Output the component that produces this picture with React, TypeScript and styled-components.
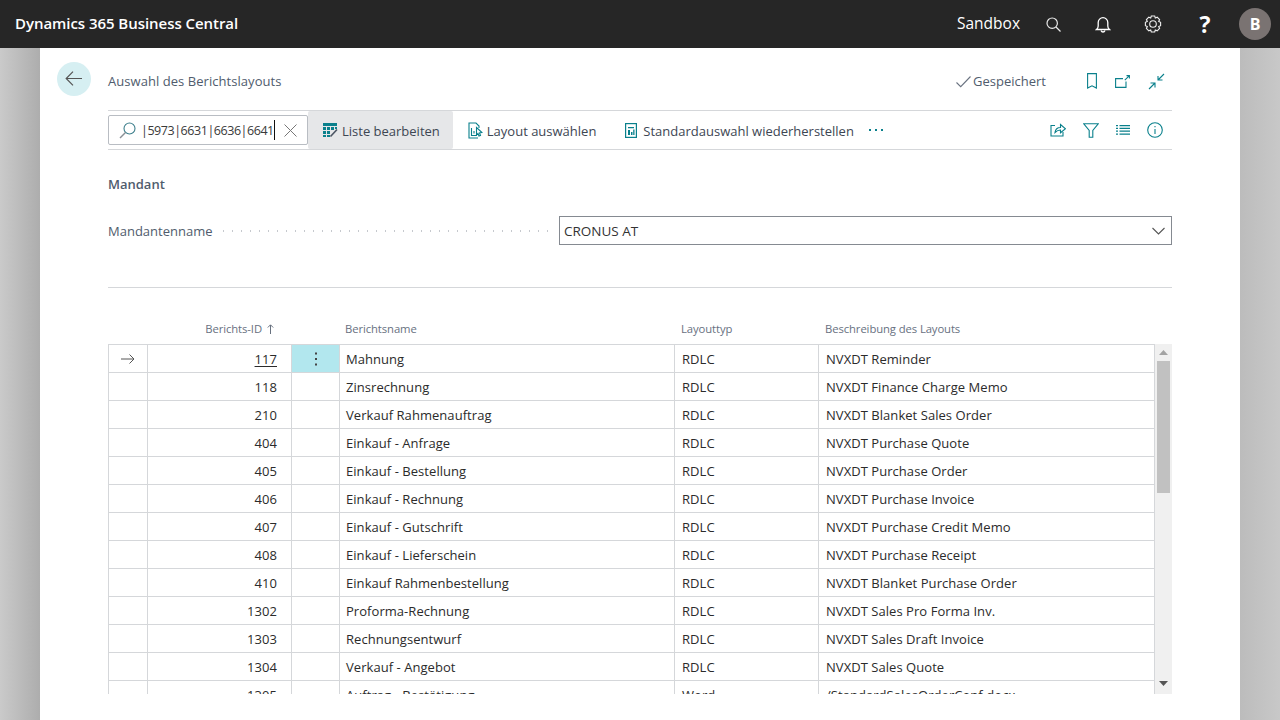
import { Fragment } from "react"
import styled, { createGlobalStyle } from "styled-components"

const rows = [
	["117", "Mahnung", "RDLC", "NVXDT Reminder"],
	["118", "Zinsrechnung", "RDLC", "NVXDT Finance Charge Memo"],
	["210", "Verkauf Rahmenauftrag", "RDLC", "NVXDT Blanket Sales Order"],
	["404", "Einkauf - Anfrage", "RDLC", "NVXDT Purchase Quote"],
	["405", "Einkauf - Bestellung", "RDLC", "NVXDT Purchase Order"],
	["406", "Einkauf - Rechnung", "RDLC", "NVXDT Purchase Invoice"],
	["407", "Einkauf - Gutschrift", "RDLC", "NVXDT Purchase Credit Memo"],
	["408", "Einkauf - Lieferschein", "RDLC", "NVXDT Purchase Receipt"],
	["410", "Einkauf Rahmenbestellung", "RDLC", "NVXDT Blanket Purchase Order"],
	["1302", "Proforma-Rechnung", "RDLC", "NVXDT Sales Pro Forma Inv."],
	["1303", "Rechnungsentwurf", "RDLC", "NVXDT Sales Draft Invoice"],
	["1304", "Verkauf - Angebot", "RDLC", "NVXDT Sales Quote"],
	["1305", "Auftrag - Bestätigung", "Word", "/StandardSalesOrderConf.docx"]
]

const GlobalStyle = createGlobalStyle`
	html, body {
		margin: 0;
		padding: 0;
		height: 100%;
		overflow: hidden;
	}
	body {
		font-family: "Open Sans", "Liberation Sans", sans-serif;
		font-size: 13px;
		color: #212121;
	}
	* {
		box-sizing: border-box;
	}
`

const Shell = styled.div`
	display: flex;
	flex-direction: column;
	width: 1280px;
	height: 720px;
	overflow: hidden;
`

const TopBar = styled.header`
	display: flex;
	align-items: center;
	flex: 0 0 48px;
	padding: 0 9px 0 15px;
	background: #262626;
	color: #fff;
`

const Brand = styled.div`
	flex: 1;
	padding-bottom: 3px;
	font-size: 15px;
	font-weight: 600;
	letter-spacing: -0.05px;
`

const EnvName = styled.div`
	margin-right: 8px;
	padding-bottom: 3px;
	font-size: 15.5px;
`

const TopIcon = styled.div`
	display: flex;
	align-items: center;
	justify-content: center;
	width: 50px;
	height: 48px;
`

const HelpMark = styled(TopIcon)`
	margin-left: 2px;
	padding-bottom: 1px;
	font-size: 23px;
	font-weight: 700;
`

const Avatar = styled.div`
	display: flex;
	align-items: center;
	justify-content: center;
	width: 32px;
	height: 32px;
	margin-left: 9px;
	border-radius: 50%;
	background: #7a7372;
	font-size: 16px;
	font-weight: 700;
`

const Stage = styled.main`
	flex: 1;
	display: flex;
	padding: 0 40px;
	background: linear-gradient(to right, #cacaca 0, #adadad 40px, #adadad 1200px, #bcbcbc 1240px, #c8c8c8 1280px);
`

const Sheet = styled.section`
	flex: 1;
	display: flex;
	flex-direction: column;
	padding: 14px 68px 0;
	background: #fff;
`

const HeaderRow = styled.div`
	display: flex;
	align-items: center;
	height: 34px;
	margin-left: -51px;
`

const BackButton = styled.div`
	display: flex;
	align-items: center;
	justify-content: center;
	width: 34px;
	height: 34px;
	margin-right: 17px;
	border-radius: 50%;
	background: #d6eff2;
`

const PageTitle = styled.div`
	flex: 1;
	padding-top: 4px;
	color: #505c6d;
	letter-spacing: 0.05px;
`

const Saved = styled.div`
	display: flex;
	align-items: center;
	gap: 2px;
	margin-right: 41px;
	padding-top: 4px;
	color: #505c6d;
`

const HeaderIcons = styled.div`
	display: flex;
	align-items: center;
	gap: 18px;
	margin-right: 7px;
	padding-top: 4px;
`

const Toolbar = styled.div`
	display: flex;
	align-items: stretch;
	height: 40px;
	margin-top: 14px;
	border-top: 1px solid #d5d7da;
	border-bottom: 1px solid #d5d7da;
`

const SearchBox = styled.div`
	display: flex;
	align-items: center;
	align-self: center;
	flex-shrink: 0;
	width: 200px;
	height: 30px;
	padding: 0 10px;
	border: 1px solid #b9bdc3;
	border-radius: 2px;

	svg {
		flex-shrink: 0;
	}
`

const SearchText = styled.span`
	margin-left: 5px;
	padding-top: 1px;
	border-right: 1px solid #111;
	font-size: 12.5px;
	line-height: 19px;
	letter-spacing: -0.45px;
	color: #3a3a3a;
`

const ClearIcon = styled.span`
	display: flex;
	margin-left: auto;
`

const Action = styled.div<{ $active?: boolean }>`
	display: flex;
	align-items: center;
	gap: 4px;
	padding: 0 13px 0 15px;
	background: ${(p) => (p.$active ? "#e6e7e9" : "transparent")};
	border-radius: 2px;
	color: #3d4653;
	white-space: nowrap;
`

const ActionLabel = styled.span`
	padding-top: 2px;
`

const MoreDots = styled.div`
	display: flex;
	align-items: center;
	gap: 4px;
	margin-left: 2px;

	& > i {
		display: block;
		width: 2px;
		height: 2px;
		background: #0a808c;
	}
`

const ToolbarEnd = styled.div`
	display: flex;
	align-items: center;
	gap: 17px;
	margin-left: auto;
	margin-right: 9px;
`

const SectionTitle = styled.h2`
	margin: 24px 0 0;
	font-size: 13px;
	line-height: 20px;
	font-weight: 600;
	color: #505c6d;
`

const Field = styled.div`
	display: flex;
	align-items: center;
	height: 29px;
	margin-top: 22px;
`

const FieldLabel = styled.label`
	color: #505c6d;
`

const Leader = styled.span`
	flex: 1;
	height: 2px;
	margin: 0 6px 0 7px;
	background-image: radial-gradient(circle, #c6c9ce 0.7px, transparent 0.9px);
	background-size: 9px 2px;
`

const SelectBox = styled.div`
	display: flex;
	align-items: center;
	justify-content: space-between;
	width: 613px;
	height: 29px;
	padding: 0 6px 0 4px;
	border: 1px solid #858a91;
	font-size: 13.5px;
	color: #333;
`

const Divider = styled.hr`
	margin: 42px 0 0;
	border: 0;
	border-top: 1px solid #d5d7da;
`

const ColumnHeads = styled.div`
	display: grid;
	grid-template-columns: 39px 144px 48px 335px 144px 336px;
	align-items: end;
	height: 56px;
	padding-bottom: 7px;
`

const ColumnHead = styled.div<{ $right?: boolean; $inset?: boolean }>`
	display: flex;
	align-items: center;
	justify-content: ${(p) => (p.$right ? "flex-end" : "flex-start")};
	gap: 5px;
	padding: ${(p) => (p.$right ? "0 17px 0 0" : p.$inset ? "0 0 0 7px" : "0 0 0 6px")};
	font-size: 11.3px;
	line-height: 16px;
	letter-spacing: -0.1px;
	color: #68717f;
`

const TableWrap = styled.div`
	display: flex;
	height: 350px;
	overflow: hidden;
`

const Table = styled.div`
	display: grid;
	grid-template-columns: 39px 144px 48px 335px 144px 336px;
	grid-auto-rows: 28px;
	flex: 0 0 1047px;
	border-left: 1px solid #d5d7da;
	border-top: 1px solid #d5d7da;
`

const Cell = styled.div<{ $right?: boolean; $on?: boolean; $inset?: boolean }>`
	display: flex;
	align-items: center;
	justify-content: ${(p) => (p.$right ? "flex-end" : "flex-start")};
	padding: ${(p) => (p.$right ? "0 14px 0 0" : p.$inset ? "0 0 0 7px" : "0 0 0 6px")};
	border-right: 1px solid #d5d7da;
	border-bottom: 1px solid #d5d7da;
	background: ${(p) => (p.$on ? "#b2e7ee" : "transparent")};
	letter-spacing: 0.05px;
	white-space: nowrap;
	color: #2b2b2b;
`

const MarkerCell = styled(Cell)`
	justify-content: center;
	padding: 0;
`

const IdLink = styled.span`
	text-decoration: underline;
	text-underline-offset: 2px;
`

const Scrollbar = styled.div`
	display: flex;
	flex-direction: column;
	align-items: center;
	flex: 1;
	background: #f0f0f0;
`

const ScrollArrow = styled.div<{ $low?: boolean }>`
	display: flex;
	align-items: center;
	flex: 0 0 17px;
	margin-bottom: ${(p) => (p.$low ? "2px" : "0")};
`

const ScrollThumb = styled.div`
	flex: 0 0 132px;
	width: 13px;
	background: #c1c1c1;
`

const ScrollSpace = styled.div`
	flex: 1;
`

const teal = "#0a808c"

const Back = () => (
	<svg width="20" height="20" viewBox="0 0 20 20" fill="none" stroke="#555" strokeWidth="1.2">
		<path d="M18 9.5H2.2M9 2.7L2.2 9.5 9 16.3" />
	</svg>
)

const Check = () => (
	<svg width="15" height="13" viewBox="0 0 15 13" fill="none" stroke="#6a7381" strokeWidth="1.1">
		<path d="M.5 7.5l4.2 4.2L14.500 1.500" />
	</svg>
)

const Bookmark = () => (
	<svg width="10" height="16" viewBox="0 0 10 16" fill="none" stroke={teal} strokeWidth="1.1">
		<path d="M.6.6h8.800v14.400L5 12.800.6 15z" />
	</svg>
)

const OpenOut = () => (
	<svg width="15" height="13" viewBox="0 0 15 13" fill="none" stroke={teal} strokeWidth="1.1">
		<path d="M11 6.500V12.400H.6V3.600h7.400M14.400.6L9.800 5.200M11.500.6h2.900v2.900" />
	</svg>
)

const Collapse = () => (
	<svg width="17" height="17" viewBox="0 0 17 17" fill="none" stroke={teal} strokeWidth="1.1">
		<path d="M16 1l-6 6M10 3v4h4.500M1 16l6-6M2.500 10H7v4.500" />
	</svg>
)

const SearchGlyph = () => (
	<svg width="17" height="17" viewBox="0 0 17 17" fill="none" strokeWidth="1.1">
		<circle cx="10.500" cy="6.500" r="5.500" stroke="#3d7f8c" />
		<path d="M6.500 10.500L1 16" stroke="#8a8f96" strokeWidth="1.4" />
	</svg>
)

const Cross = () => (
	<svg width="13" height="13" viewBox="0 0 13 13" fill="none" stroke="#777" strokeWidth="1">
		<path d="M.5.5l12 12M12.500.5l-12 12" />
	</svg>
)

const EditListIcon = () => (
	<svg width="15" height="15" viewBox="0 0 15 15">
		<path fill={teal} d="M0 0h14v3H0zM0 4h3v3H0zM4 4h3v3H4zM8 4h3v3H8zM12 4h2v2h-2zM0 8h3v3H0zM4 8h3v3H4zM0 12h3v2H0zM4 12h3v2H4z" />
		<path fill="none" stroke="#4b5563" strokeWidth="1.600" d="M7.500 13.500l6.500-7" />
	</svg>
)

const LayoutPick = () => (
	<svg width="15" height="17" viewBox="0 0 15 17" fill="none" stroke={teal} strokeWidth="1.1">
		<path d="M10 16H1V1h7l3 3v2" />
		<path d="M3.500 6v7.500H9M6 11.500V9" />
		<path d="M8.500 5.500l5.500 5-2.500.5 1 2.500-1.500.5-1-2.500-1.500 1.500z" />
	</svg>
)

const Report = () => (
	<svg width="15" height="15" viewBox="0 0 15 15">
		<rect x="1.600" y=".6" width="10.800" height="13.800" fill="none" stroke={teal} strokeWidth="1.2" />
		<path fill={teal} d="M4 4h6v1.200H4zM4 7h2v5H4zM7 9h1.500v3H7zM9.200 6.500h1.300V12H9.200z" />
	</svg>
)

const Share = () => (
	<svg width="16" height="14" viewBox="0 0 16 14" fill="none" stroke={teal} strokeWidth="1.1">
		<path d="M5 2.500H1V13h12V9" />
		<path d="M5 9.500C5.500 6 8 4.500 10.500 4.500V1.500l5 4.300-5 4V7C8.500 7 6.500 8 5 9.500z" />
	</svg>
)

const Funnel = () => (
	<svg width="16" height="15" viewBox="0 0 16 15" fill="none" stroke={teal} strokeWidth="1.1">
		<path d="M.8.8h14.400L9.800 7.500v6.700H6.200V7.500z" />
	</svg>
)

const ListLines = () => (
	<svg width="14" height="10" viewBox="0 0 14 10" fill="none" stroke={teal} strokeWidth="1.2">
		<path d="M0 .6h2M3.500.6H14M0 3.400h2M3.500 3.400H14M0 6.200h2M3.500 6.200H14M0 9.200h2M3.500 9.200H14" />
	</svg>
)

const Info = () => (
	<svg width="16" height="16" viewBox="0 0 16 16" fill="none" stroke={teal} strokeWidth="1.1">
		<circle cx="8" cy="8" r="7.300" />
		<path d="M8 7v5M8 4v1.300" />
	</svg>
)

const Chevron = () => (
	<svg width="13" height="8" viewBox="0 0 13 8" fill="none" stroke="#555" strokeWidth="1.1">
		<path d="M.5 1l6 6 6-6" />
	</svg>
)

const RowArrow = () => (
	<svg width="14" height="10" viewBox="0 0 14 10" fill="none" stroke="#555" strokeWidth="1">
		<path d="M0 5h13M8.500.5L13 5 8.500 9.500" />
	</svg>
)

const SortUp = () => (
	<svg width="7" height="10" viewBox="0 0 7 10" fill="none" stroke="#68717f" strokeWidth="1">
		<path d="M3.500 10V1M.8 3.500L3.500.8l2.700 2.700" />
	</svg>
)

const Kebab = () => (
	<svg width="4" height="14" viewBox="0 0 4 14" fill="#444">
		<rect x="1" y="0.5" width="2" height="2" />
		<rect x="1" y="6" width="2" height="2" />
		<rect x="1" y="11.5" width="2" height="2" />
	</svg>
)

const TopSearch = () => (
	<svg width="15" height="15" viewBox="0 0 15 15" fill="none" stroke="#e8e8e8" strokeWidth="1.2">
		<circle cx="6.200" cy="6.200" r="5.200" />
		<path d="M10 10l4.500 4.500" />
	</svg>
)

const Bell = () => (
	<svg width="16" height="17" viewBox="0 0 16 17" fill="none" stroke="#fff" strokeWidth="1.3">
		<path d="M1.500 13.500c1.200-1 1.700-2 1.700-3.500V6.500a4.800 4.800 0 0 1 9.600 0V10c0 1.500.5 2.500 1.700 3.500z" />
		<path d="M6 14.500c.4 1 1 1.500 2 1.500s1.600-.5 2-1.500" />
	</svg>
)

const Gear = () => (
	<svg width="18" height="18" viewBox="0 0 18 18" fill="none" stroke="#eee" strokeWidth="1.1">
		<circle cx="9" cy="9" r="3.300" />
		<path d="M7.300 1h3.400l.6 2 1.900-.8 2.400 2.400-.9 1.800 1.900.9v3.400l-1.900.9.900 1.800-2.400 2.400-1.900-.8-.6 2H7.300l-.6-2-1.900.8-2.400-2.400.9-1.800-1.900-.9V7.300l1.900-.9-.9-1.800 2.400-2.400 1.900.8z" />
	</svg>
)

const ArrowUp = () => (
	<svg width="9" height="5" viewBox="0 0 9 5" fill="#a3a3a3">
		<path d="M4.500 0L9 5H0z" />
	</svg>
)

const ArrowDown = () => (
	<svg width="9" height="5" viewBox="0 0 9 5" fill="#555">
		<path d="M0 0h9L4.500 5z" />
	</svg>
)

const App = () => (
	<Shell>
		<GlobalStyle />
		<TopBar>
			<Brand>Dynamics 365 Business Central</Brand>
			<EnvName>Sandbox</EnvName>
			<TopIcon><TopSearch /></TopIcon>
			<TopIcon><Bell /></TopIcon>
			<TopIcon><Gear /></TopIcon>
			<HelpMark>?</HelpMark>
			<Avatar>B</Avatar>
		</TopBar>
		<Stage>
			<Sheet>
				<HeaderRow>
					<BackButton><Back /></BackButton>
					<PageTitle>Auswahl des Berichtslayouts</PageTitle>
					<Saved><Check />Gespeichert</Saved>
					<HeaderIcons>
						<Bookmark />
						<OpenOut />
						<Collapse />
					</HeaderIcons>
				</HeaderRow>
				<Toolbar>
					<SearchBox>
						<SearchGlyph />
						<SearchText>|5973|6631|6636|6641</SearchText>
						<ClearIcon><Cross /></ClearIcon>
					</SearchBox>
					<Action $active><EditListIcon /><ActionLabel>Liste bearbeiten</ActionLabel></Action>
					<Action><LayoutPick /><ActionLabel>Layout auswählen</ActionLabel></Action>
					<Action><Report /><ActionLabel>Standardauswahl wiederherstellen</ActionLabel></Action>
					<MoreDots><i /><i /><i /></MoreDots>
					<ToolbarEnd>
						<Share />
						<Funnel />
						<ListLines />
						<Info />
					</ToolbarEnd>
				</Toolbar>
				<SectionTitle>Mandant</SectionTitle>
				<Field>
					<FieldLabel>Mandantenname</FieldLabel>
					<Leader />
					<SelectBox>
						CRONUS AT
						<Chevron />
					</SelectBox>
				</Field>
				<Divider />
				<ColumnHeads>
					<ColumnHead />
					<ColumnHead $right>Berichts-ID<SortUp /></ColumnHead>
					<ColumnHead />
					<ColumnHead>Berichtsname</ColumnHead>
					<ColumnHead $inset>Layouttyp</ColumnHead>
					<ColumnHead $inset>Beschreibung des Layouts</ColumnHead>
				</ColumnHeads>
				<TableWrap>
					<Table>
						{rows.map((row, i) => (
							<Fragment key={row[0]}>
								<MarkerCell>{i === 0 && <RowArrow />}</MarkerCell>
								<Cell $right>{i === 0 ? <IdLink>{row[0]}</IdLink> : row[0]}</Cell>
								<MarkerCell $on={i === 0}>{i === 0 && <Kebab />}</MarkerCell>
								<Cell>{row[1]}</Cell>
								<Cell $inset>{row[2]}</Cell>
								<Cell $inset>{row[3]}</Cell>
							</Fragment>
						))}
					</Table>
					<Scrollbar>
						<ScrollArrow><ArrowUp /></ScrollArrow>
						<ScrollThumb />
						<ScrollSpace />
						<ScrollArrow $low><ArrowDown /></ScrollArrow>
					</Scrollbar>
				</TableWrap>
			</Sheet>
		</Stage>
	</Shell>
)

export default App
